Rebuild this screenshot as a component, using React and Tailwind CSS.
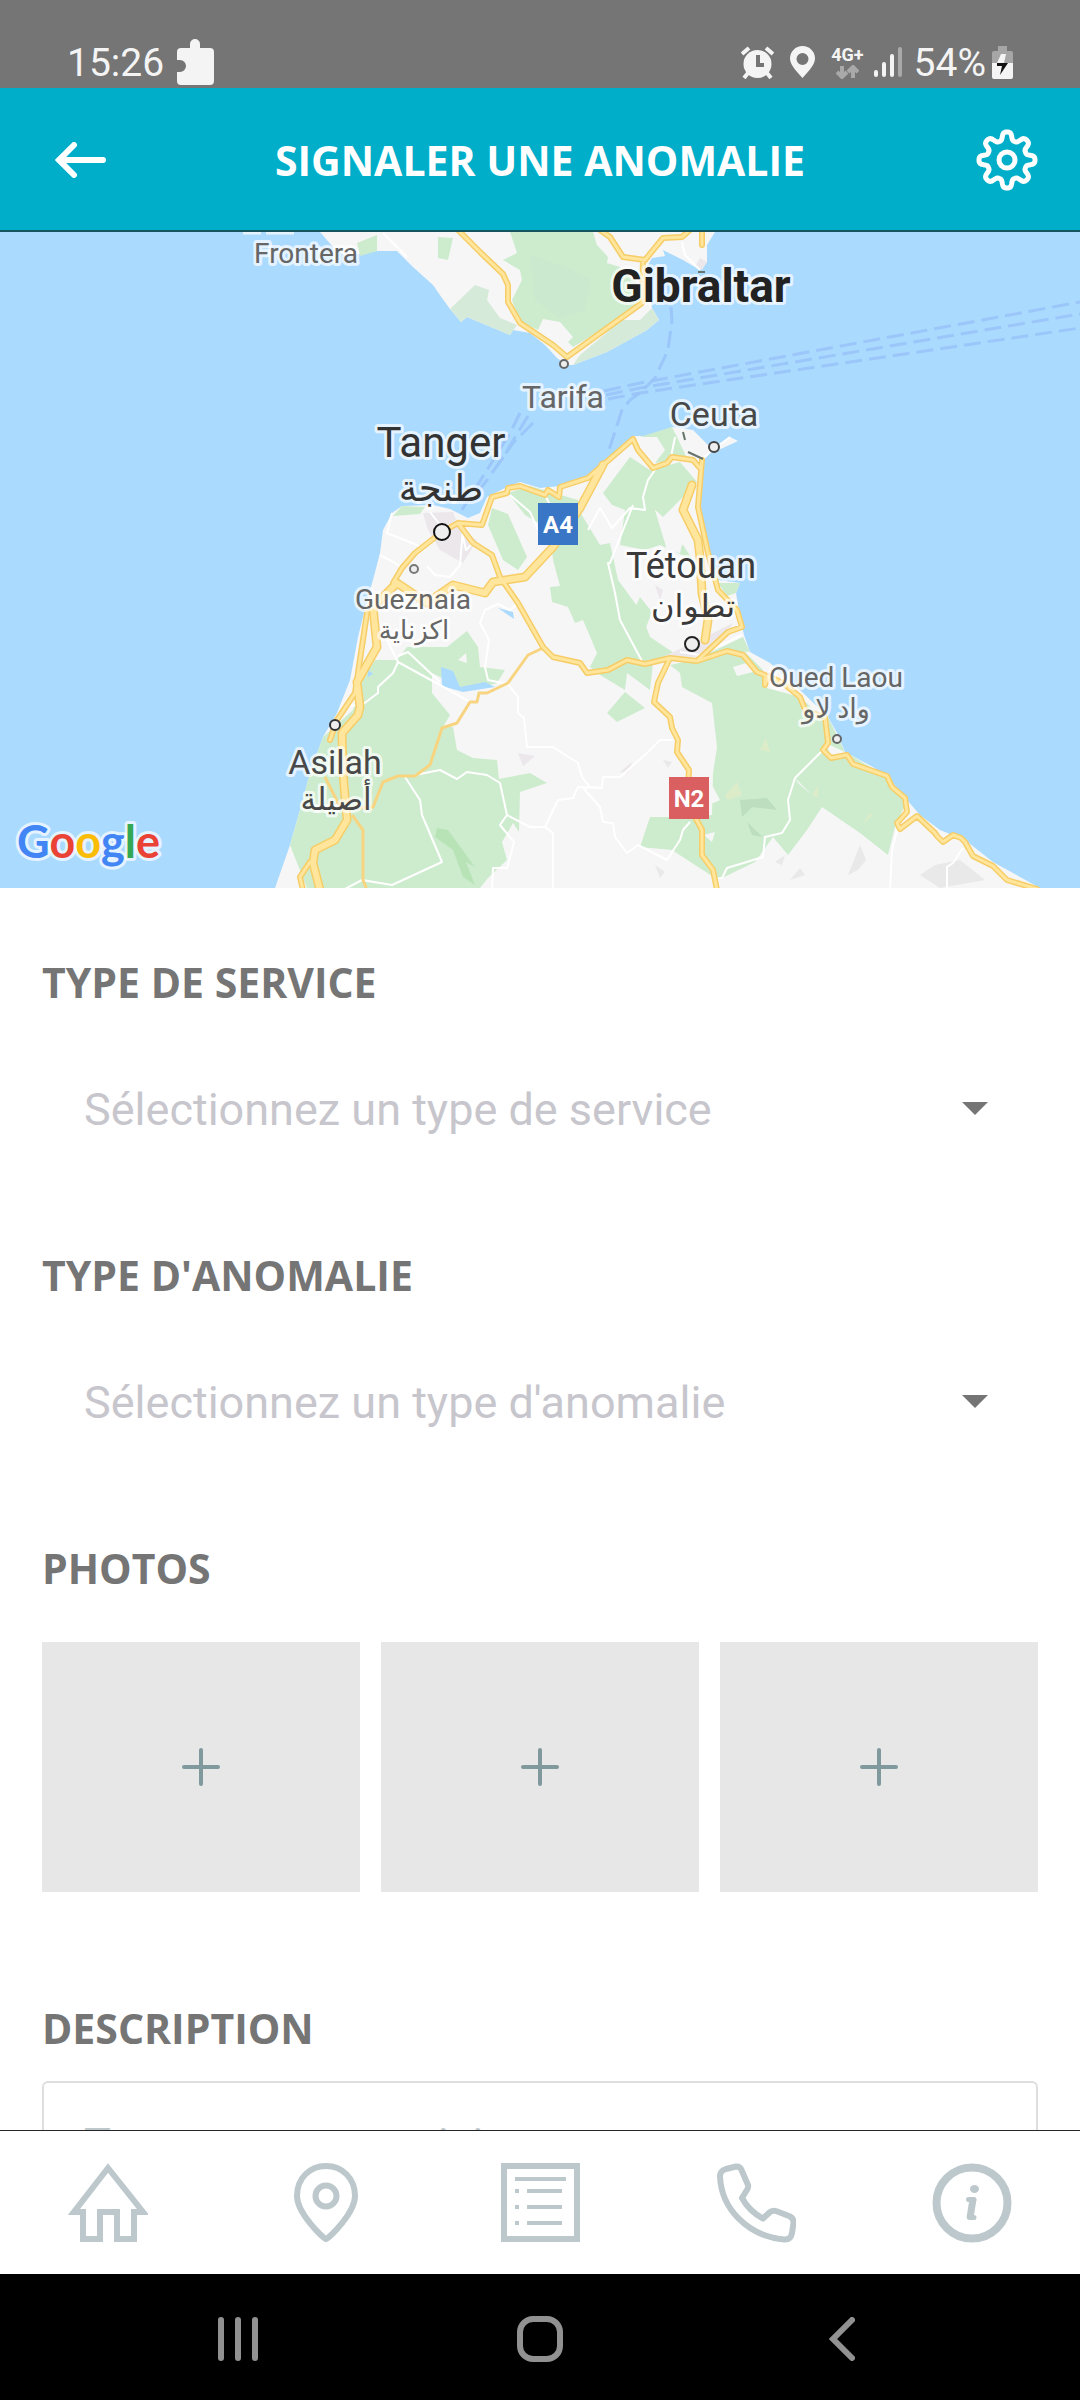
import { useState } from 'react';

const services = ['Éclairage public', 'Propreté', 'Voirie'];
const anomalies = ['Panne', 'Dégradation', 'Autre'];

export default function App(){
    return(
        <div className="flex h-screen flex-col bg-white font-[Roboto,sans-serif]">
            <StatusBar />
            <Header />
            <main className="min-h-0 flex-1 overflow-y-auto [scrollbar-width:none]">
                <Carte />
                <Formulaire />
            </main>
            <TabBar />
            <SystemBar />
        </div>
    )
}

function StatusBar(){
    return(
        <div className="flex h-[88px] shrink-0 items-center justify-between bg-[#757575] pt-9 pr-[67px] pl-[67px] text-[#f4f4f4]">
            <div className="flex items-center gap-3">
                <span className="pt-[2px] text-[39px] leading-none">15:26</span>
                <svg width="38" height="46" viewBox="0 0 38 46" fill="#f4f4f4">
                    <path d="M14 9V5a5 5 0 0 1 10 0v4h10a4 4 0 0 1 4 4v29a4 4 0 0 1-4 4H5a4 4 0 0 1-4-4V33h3a6 6 0 0 0 0-12H1v-8a4 4 0 0 1 4-4z" />
                </svg>
            </div>
            <div className="flex items-center">
                <svg width="33" height="33" viewBox="0 0 33 33">
                    <circle cx="16.500" cy="18" r="14" fill="#f4f4f4" />
                    <path d="M1 8 8 2M32 8l-7-6" stroke="#f4f4f4" strokeWidth="4" />
                    <path d="M7 27l-4 5M26 27l4 5" stroke="#f4f4f4" strokeWidth="4" />
                    <path d="M17 9v10h6" fill="none" stroke="#757575" strokeWidth="4" />
                </svg>
                <svg className="ml-4" width="25" height="32" viewBox="0 0 25 32">
                    <path fillRule="evenodd" fill="#f4f4f4" d="M12.500 0C19.500 0 25 5.500 25 12.500 25 18 20 24 12.500 32 5 24 0 18 0 12.500 0 5.500 5.500 0 12.500 0zm0 7a6 6 0 1 0 0 12 6 6 0 0 0 0-12z" />
                </svg>
                <div className="ml-4 flex flex-col items-center gap-px">
                    <span className="text-[18px] leading-[18px] font-bold">4G+</span>
                    <svg width="23" height="14" viewBox="0 0 23 14" fill="none" stroke="#a9a9a9" strokeWidth="4">
                        <path d="M6 1v11M1 7l5 5 5-5M17 13V3M12 7l5-5 5 5" />
                    </svg>
                </div>
                <svg className="ml-[10px]" width="28" height="30" viewBox="0 0 28 30" strokeWidth="4" strokeLinecap="round">
                    <path d="M2 25v3M10 17v11M18 9v19" stroke="#f4f4f4" />
                    <path d="M26 2v26" stroke="#a9a9a9" />
                </svg>
                <span className="ml-3 pt-[2px] text-[39px] leading-none">54%</span>
                <svg className="ml-[6px]" width="21" height="33" viewBox="0 0 21 33">
                    <path d="M6 0h9v5h4a2 2 0 0 1 2 2v10H0V7a2 2 0 0 1 2-2h4z" fill="#a6a6a6" />
                    <path d="M0 17h21v14a2 2 0 0 1-2 2H2a2 2 0 0 1-2-2z" fill="#f4f4f4" />
                    <path d="M9 8h5l-2 9H5z" fill="#f4f4f4" />
                    <path d="M5 17h11L8 29l2-9H5z" fill="#111" />
                </svg>
            </div>
        </div>
    )
}

// contour of the eight-toothed wheel
const gearPoints = Array.from({length: 192}, (_, i) => {
    const a = (i / 192) * Math.PI * 2;
    const r = 24 + 4 * Math.tanh(1.8 * Math.cos(8 * a)) / Math.tanh(1.8);
    return `${(31 + r * Math.cos(a)).toFixed(2)},${(31 + r * Math.sin(a)).toFixed(2)}`;
}).join(' ');

function Header(){
    return(
        <header className="flex h-[144px] shrink-0 items-center justify-between border-b-2 border-[#14565f] bg-[#00aec9] px-[42px] pt-[2px] text-white">
            <button aria-label="Retour" className="flex w-16 justify-end">
                <svg width="53" height="36" viewBox="0 0 53 36" fill="none" stroke="currentColor" strokeWidth="6" strokeLinecap="round">
                    <path d="M6 18h44M21 3 6 18l15 15" />
                </svg>
            </button>
            <h1 className="font-['Open_Sans',sans-serif] text-[41px] leading-[60px] font-bold">SIGNALER UNE ANOMALIE</h1>
            <button aria-label="Paramètres" className="flex w-16 justify-end">
                <svg width="62" height="62" viewBox="0 0 62 62" fill="none" stroke="currentColor" strokeWidth="5" strokeLinejoin="round">
                    <polygon points={gearPoints} />
                    <circle cx="31" cy="31" r="8" />
                </svg>
            </button>
        </header>
    )
}

const autoroutes = [
    'M603 465 580 508 553 547 525 577 493 582 485 593 453 585 427 603 397 583 373 607 377 647 357 682 360 707 358 715 342 733 343 773 347 820 335 840 315 850 313 863 320 890',
    'M692 485 683 510 698 540 700 557 702 593 708 620 705 640',
];

const routes = [
    'M458 230 480 252 503 274 508 285 508 302 520 323 553 345 567 357 642 303 643 260',
    'M600 230 610 237 623 257 645 260 663 238 682 237 690 230',
    'M702 228V245',
    'M633 439 588 478 560 487 559 497 548 490 545 495 520 486 508 488 507 493 492 497 482 525 458 523 442 532 415 553 402 568 393 583',
    'M633 439 638 450 653 468 667 463 672 457 693 460 700 468',
    'M702 460 698 507 708 553 718 590 737 610 742 627 728 632 698 660',
    'M458 523 473 543 492 555 500 577 518 603 543 647 553 657 580 663 587 673 608 670 627 660 645 664 670 658 697 661 727 651 743 655 757 672 765 675 765 685 768 676 783 683 800 697 806 712 825 717 828 743 823 750 831 758 847 755 853 764 887 776 892 787 905 798 907 812 897 823 900 829 917 816 935 833 937 836 943 842 953 835 961 838 965 842 973 856 993 866 1007 880 1037 889',
    'M670 658 658 683 654 702 670 717 672 728 678 740 677 752 689 770 688 790 695 817 702 830 702 855 713 870 717 890',
    'M367 613 355 693 337 720 330 740',
    'M310 862 300 877 303 890',
];

const petitesRoutes = [
    'M543 648 528 655 508 683 487 693 479 693 477 702 470 702 457 723 442 728 430 765 415 776 398 776 383 782 373 807 357 808',
    'M352 815 363 830 363 880 367 890',
    'M325 777 340 807',
];

const chemins = [
    'M383 233 407 257M682 242 685 255 700 270',
    'M398 662 440 685 470 702M387 640 398 662 393 673 378 687 378 693 362 705 343 706',
    'M398 656 408 652 440 682',
    'M518 603 510 610 498 604 485 610 480 623 489 640 485 667 488 680 508 684 518 697 518 713 524 718 527 747 553 747 578 763 582 777 590 787 602 788 603 777 620 777 647 753 660 740 673 740',
    'M602 788 578 787 573 798 558 800 545 827 530 827 507 815 500 783 487 775 467 772 457 779 440 770 415 775',
    'M545 827 553 833 553 890',
    'M583 788 600 807 603 822 613 823 615 837 627 853 638 845 667 860 680 840 683 830 690 822',
    'M405 777 420 800 422 815 442 862 392 885 362 880 343 890',
    'M507 815 500 825 514 842 507 868 493 868 492 890',
    'M823 750 795 778 788 800 790 820 782 833 765 837 763 857 727 868 722 878 714 879',
    'M897 830 892 850 890 890M963 848 953 863 947 867 947 890',
    'M633 505 610 563 608 563 615 593 620 620 643 663',
    'M655 470 648 480 643 497 645 510 630 508 612 528 600 508 588 530',
    'M510 495 530 512 538 530M545 495 550 505',
    'M392 513 387 533 417 545 425 550M380 555 395 563 402 568M430 512 440 525M463 528 460 565 450 577 435 575 427 566M473 543 466 550 463 536',
    'M675 437 671 457M702 460 710 452 730 437',
    'M680 652 700 655 742 635M708 618 740 615',
];

const villes = [
    {cx: 564, cy: 364, r: 4, color: '#666'},
    {cx: 442, cy: 532, r: 8, color: '#111'},
    {cx: 414, cy: 569, r: 4, color: '#777'},
    {cx: 714, cy: 447, r: 5, color: '#444'},
    {cx: 692, cy: 644, r: 7, color: '#222'},
    {cx: 335, cy: 725, r: 5, color: '#333'},
    {cx: 837, cy: 739, r: 4, color: '#666'},
];

const libelles = [
    {x: 306, y: 263, size: 28, color: '#666', text: 'Frontera'},
    {x: 563, y: 408, size: 32, color: '#666', text: 'Tarifa'},
    {x: 441, y: 457, size: 42, color: '#333', text: 'Tanger'},
    {x: 441, y: 501, size: 37, color: '#333', text: 'طنجة'},
    {x: 701, y: 302, size: 46, color: '#222', text: 'Gibraltar', bold: true},
    {x: 714, y: 426, size: 34, color: '#484848', text: 'Ceuta'},
    {x: 691, y: 578, size: 36, color: '#3a3a3a', text: 'Tétouan'},
    {x: 693, y: 617, size: 32, color: '#3a3a3a', text: 'تطوان'},
    {x: 413, y: 609, size: 28, color: '#666', text: 'Gueznaia'},
    {x: 414, y: 639, size: 26, color: '#666', text: 'اكزناية'},
    {x: 335, y: 774, size: 34, color: '#484848', text: 'Asilah'},
    {x: 336, y: 810, size: 31, color: '#484848', text: 'أصيلة'},
    {x: 836, y: 687, size: 28, color: '#666', text: 'Oued Laou'},
    {x: 836, y: 718, size: 27, color: '#666', text: 'واد لاو'},
];

function Carte(){
    return(
        <svg className="block h-auto w-full" viewBox="0 232 1080 656" role="img" aria-label="Carte" fill="none">
            <rect y="232" width="1080" height="656" fill="#abdaff" />

            {/* terres */}
            <g fill="#f6f6f6">
                <path d="M320 232 333 247 345 256 377 251 397 251 413 267 433 285 442 298 450 309 461 322 467 317 510 335 513 330 530 333 545 345 557 358 567 365 573 365 607 352 647 330 659 320 652 308 650 290 645 270 652 258 665 256 663 250 683 260 700 270 707 262 707 245 715 232z" />
                <path d="M275 888 290 845 302 803 310 773 323 737 337 713 350 680 358 637 368 597 373 580 380 553 383 530 392 513 402 506 433 505 450 509 468 518 480 513 487 497 507 487 520 482 540 488 560 486 587 477 603 463 620 447 633 436 653 436 672 427 693 430 708 445 718 447 730 437 738 441 723 448 710 453 703 460 700 510 708 550 718 580 740 583 736 593 740 617 744 635 750 652 770 663 800 690 828 717 837 733 845 752 873 767 888 777 907 800 920 815 940 830 965 840 993 862 1040 888z" />
            </g>

            {/* zones vertes */}
            <g fill="#cdecce">
                <path d="M510 232H593L597 245 608 257 607 263 620 267 640 287 642 303 613 323 573 347 568 342 573 337 560 322 543 319 538 330 520 322 512 300 522 280 520 270 503 260 517 253z" />
                <path d="M438 237 453 238 448 260 438 258zM357 243 377 235 377 251 360 256z" />
                <path d="M323 737 353 710 362 680 375 660 397 660 407 647 447 647 467 631 478 647 480 667 505 670 497 683 473 690 460 687 432 673 432 693 450 715 443 727 453 727 457 750 473 758 497 760 499 779 530 773 547 783 520 792 519 832 513 823 502 842 507 860 488 878 480 888H307L290 845 302 803 310 773z" />
                <path d="M492 508 508 514 527 557 518 570 503 560 488 525z" />
                <path d="M508 493 530 486 578 500 580 512 600 545 610 543 618 580 640 610 650 637 680 657 653 663 650 690 627 673 625 690 600 675 590 667 597 653 583 620 575 623 568 607 552 602 550 587 560 586 553 560 550 530 525 515z" />
                <path d="M603 493 630 457 650 470 680 462 697 482 687 493 663 517 655 510 667 540 683 545 693 560 660 545 645 550 620 545 625 510 612 505z" />
                <path d="M640 437 672 427 677 437 687 458 655 463 665 450 657 437z" />
                <path d="M625 692 645 708 617 722 607 713z" />
                <path d="M640 597 652 612 645 630 632 615z" />
                <path d="M670 665 693 660 727 650 743 650 763 670 763 687 800 697 825 720 827 747 832 758 847 753 887 777 907 800 895 827 888 855 860 833 822 807 807 830 788 855 773 837 755 862 718 880 672 850 640 847 650 817 690 817 712 815 713 773 717 747 712 703 682 687 680 673z" />
                <path d="M718 583 740 583 736 593 727 596zM705 655 743 637 750 652 727 650zM828 717 845 752 830 745z" />
                <path d="M393 516 402 506 425 507 420 514z" />
            </g>
            <g fill="#d5ead8">
                <path d="M573 365 607 352 647 330 659 320 652 308 640 320 622 320 580 355z" />
                <path d="M450 309 475 285 489 290 487 300 500 318 517 325 510 335 467 317 461 322z" />
            </g>
            <path fill="#cbe9cf" d="M530 255 560 265 590 280 585 310 560 318 535 300z" />
            <g fill="#b7e3b7">
                <path d="M437 828 448 830 475 867 466 862 475 885 463 877 453 850 435 837z" />
            </g>
            <g fill="#bddfc0">
                <path d="M740 800 767 798 777 810 752 807 742 817zM747 822 763 837 752 835z" />
            </g>
            <path fill="#dcecc9" d="M760 750 766 738 770 752zM725 795 737 782 742 795 728 800zM812 795 818 785 818 798zM863 824 870 812 872 816z" />
            <path fill="#f6f6f6" d="M733 667 750 662 753 672 737 676zM712 785 720 800 711 804zM704 835 715 832 712 842zM795 778 812 795 798 783zM458 660 466 653 467 663zM655 510 663 517 683 540 680 553 667 550z" />
            <path fill="#ebe7eb" d="M423 513 453 512 460 530 477 540 463 563 440 550 428 530zM660 658 695 642 733 623 728 632 703 657zM518 753 535 756 523 766zM620 772 632 762 628 773zM655 585 663 590 660 600zM700 258 707 262 702 270 696 265z" />
            <path fill="#e9e9e9" d="M848 875 860 845 866 860 858 870zM920 875 935 865 960 860 985 880 940 888zM655 865 665 872 660 878zM775 862 785 855 782 865zM663 760 672 762 668 768zM790 880 800 868 805 875z" />
            <path fill="#abdaff" d="M441 667 453 671 460 687 485 682 495 687 463 692 442 686zM498 608 513 612 514 619zM368 670 373 674 368 677z" />

            {/* lignes de ferry */}
            <g stroke="#97c0f8" strokeWidth="3" strokeOpacity="0.8" strokeDasharray="17 7">
                <path d="M604 391 640 383 1080 302M606 395 640 388 1080 314M608 399 640 393 1080 328" />
                <path d="M520 413 510 433 487 470 460 513M533 423 513 443 487 480 470 502M528 416 500 462" />
                <path d="M671 307 672 320 668 350 655 378 640 393 630 400 622 410 608 453" />
            </g>

            {/* routes */}
            <path d={chemins.join('')} stroke="#fff" strokeWidth="2" strokeLinejoin="round" />
            <path d={petitesRoutes.join('')} stroke="#f7d480" strokeWidth="3" strokeLinejoin="round" />
            <g strokeLinejoin="round" strokeLinecap="round">
                <path d={routes.join('')} stroke="#f6cd67" strokeWidth="6" />
                <path d={autoroutes.join('')} stroke="#f6cd67" strokeWidth="9" />
                <path d={routes.join('')} stroke="#ffe69c" strokeWidth="3" />
                <path d={autoroutes.join('')} stroke="#ffe69c" strokeWidth="6" />
            </g>
            <path d="M688 452 703 459M683 432 685 440M698 272H705" stroke="#66746c" strokeWidth="2" />
            <path d="M243 233h18M266 233h28" stroke="#fff" strokeOpacity="0.7" strokeWidth="3" />

            {villes.map(ville => (
                <circle key={ville.cx} cx={ville.cx} cy={ville.cy} r={ville.r} fill="#eee" stroke={ville.color} strokeWidth="2" />
            ))}

            <g className="font-[Roboto,'DejaVu_Sans',sans-serif]" textAnchor="middle" stroke="#fff" strokeOpacity="0.7" strokeWidth="6" strokeLinejoin="round" paintOrder="stroke">
                {libelles.map(lib => (
                    <text key={lib.text} x={lib.x} y={lib.y} fontSize={lib.size} fontWeight={lib.bold ? 700 : 400} fill={lib.color}>{lib.text}</text>
                ))}
            </g>

            <g className="font-[Roboto,sans-serif]" textAnchor="middle" fontSize="24" fontWeight="700">
                <rect x="538" y="503" width="40" height="42" fill="#3a76c6" />
                <text x="558" y="533" fill="#fff">A4</text>
                <rect x="669" y="777" width="40" height="42" fill="#da5f60" />
                <text x="689" y="807" fill="#fff">N2</text>
            </g>

            <text className="font-[Lato,sans-serif]" x="17" y="858" fontSize="45" fontWeight="700" stroke="#fff" strokeOpacity="0.7" strokeWidth="6" strokeLinejoin="round" paintOrder="stroke">
                <tspan fill="#4285f4">G</tspan>
                <tspan fill="#ea4335">o</tspan>
                <tspan fill="#fbbc05">o</tspan>
                <tspan fill="#4285f4">g</tspan>
                <tspan fill="#34a853">l</tspan>
                <tspan fill="#ea4335">e</tspan>
            </text>
        </svg>
    )
}

function Formulaire(){
    const [service, setService] = useState('');
    const [anomalie, setAnomalie] = useState('');

    return(
        <form className="px-[42px] pt-16" onSubmit={(e) => e.preventDefault()}>
            <ChoixType id="service" label="TYPE DE SERVICE" placeholder="Sélectionnez un type de service"
                options={services} value={service} onChange={setService} />
            <ChoixType id="anomalie" label="TYPE D'ANOMALIE" placeholder="Sélectionnez un type d'anomalie"
                options={anomalies} value={anomalie} onChange={setAnomalie} />

            <h2 className="font-['Open_Sans',sans-serif] text-[41px] leading-[60px] font-bold text-[#757575]">PHOTOS</h2>
            <div className="mt-11 grid grid-cols-3 gap-[21px]">
                {[1, 2, 3].map(n => (
                    <button key={n} type="button" aria-label={`Ajouter la photo ${n}`} className="flex h-[250px] items-center justify-center bg-[#e7e7e7]">
                        <svg width="38" height="38" viewBox="0 0 38 38" stroke="#7f999c" strokeWidth="4" strokeLinecap="round">
                            <path d="M19 2v34M2 19h34" />
                        </svg>
                    </button>
                ))}
            </div>

            <label htmlFor="description" className="mt-[106px] block font-['Open_Sans',sans-serif] text-[41px] leading-[60px] font-bold text-[#757575]">DESCRIPTION</label>
            <textarea id="description" placeholder="Tapez votre texte ici"
                className="mt-[23px] mb-16 block h-[280px] w-full resize-none rounded-md border-2 border-[#dedede] px-10 pt-8 text-[45px] leading-[60px] text-[#757575] placeholder:text-[#bdc8cc]" />
        </form>
    )
}

function ChoixType({id, label, placeholder, options, value, onChange}){
    return(
        <div className="mb-[87px]">
            <label htmlFor={id} className="block font-['Open_Sans',sans-serif] text-[41px] leading-[60px] font-bold text-[#757575]">{label}</label>
            <div className="relative mt-[46px]">
                <select id={id} value={value} onChange={(e) => onChange(e.target.value)}
                    className="block h-[100px] w-full appearance-none bg-transparent px-[42px] pt-1 text-[45px] text-[#c7c6cd]">
                    <option value="">{placeholder}</option>
                    {options.map(option => (
                        <option key={option} value={option}>{option}</option>
                    ))}
                </select>
                <svg className="pointer-events-none absolute inset-y-0 right-[50px] my-auto" width="26" height="13" viewBox="0 0 26 13" fill="#757575">
                    <path d="M0 0h26L13 13z" />
                </svg>
            </div>
        </div>
    )
}

const onglets = [
    {
        nom: 'Accueil',
        icone: <path d="M40 5 6 49h9v27h17V49h17v27h17V49h9z" />
    },
    {
        nom: 'Carte',
        icone: <>
            <path d="M42 76C38 74 13 50 13 33 13 15 26 3 42 3s29 12 29 30C71 50 46 74 42 76z" />
            <circle cx="42" cy="33" r="10.500" />
        </>
    },
    {
        nom: 'Signalements',
        icone: <>
            <rect x="4" y="3" width="73" height="73" />
            <path strokeWidth="4" d="M15 16h51M15 28h4M15 44h4M15 60h4M27 28h35M27 44h35M27 60h35" />
        </>
    },
    {
        nom: 'Téléphone',
        icone: <path strokeLinejoin="round" d="M10 6 20 3.500Q24 3 25.500 7L32 22Q32.500 24 31.500 26L26 35Q33 48 47 55.500L54 49Q57 47 60 48L73 53Q78 55 77.500 60L76 70Q75 77 68 76.500C31 73 5 45 4 13Q4 8 10 6z" />
    },
    {
        nom: 'Informations',
        icone: <>
            <circle cx="40" cy="40" r="35.500" strokeWidth="8" />
            <ellipse cx="42.500" cy="26" rx="4.500" ry="4" fill="#bdc8cc" stroke="none" />
            <path strokeLinejoin="round" strokeLinecap="round" strokeWidth="5" d="M36.500 36.500H42L37.500 54.500H42" />
            <path strokeWidth="7" d="M41 36 38 55" />
        </>
    },
];

function TabBar(){
    return(
        <nav className="grid h-[144px] shrink-0 grid-cols-5 border-t border-[#262626] bg-white">
            {onglets.map(onglet => (
                <a key={onglet.nom} href="#" aria-label={onglet.nom} className="flex items-center justify-center">
                    <svg width="80" height="80" viewBox="0 0 80 80" fill="none" stroke="#bdc8cc" strokeWidth="6">
                        {onglet.icone}
                    </svg>
                </a>
            ))}
        </nav>
    )
}

function SystemBar(){
    return(
        <div className="grid h-[126px] shrink-0 grid-cols-3 bg-black px-[8%] pt-1">
            <button aria-label="Applications récentes" className="flex items-center justify-center">
                <svg width="42" height="44" viewBox="0 0 42 44" stroke="#919191" strokeWidth="6" strokeLinecap="round">
                    <path d="M4 3v38M21 3v38M38 3v38" />
                </svg>
            </button>
            <button aria-label="Écran d'accueil" className="flex items-center justify-center">
                <svg width="46" height="46" viewBox="0 0 46 46" fill="none" stroke="#919191" strokeWidth="6">
                    <rect x="3" y="3" width="40" height="40" rx="13" />
                </svg>
            </button>
            <button aria-label="Précédent" className="flex items-center justify-center">
                <svg width="26" height="44" viewBox="0 0 26 44" fill="none" stroke="#919191" strokeWidth="6" strokeLinecap="round">
                    <path d="M23 3 4 22l19 19" />
                </svg>
            </button>
        </div>
    )
}
